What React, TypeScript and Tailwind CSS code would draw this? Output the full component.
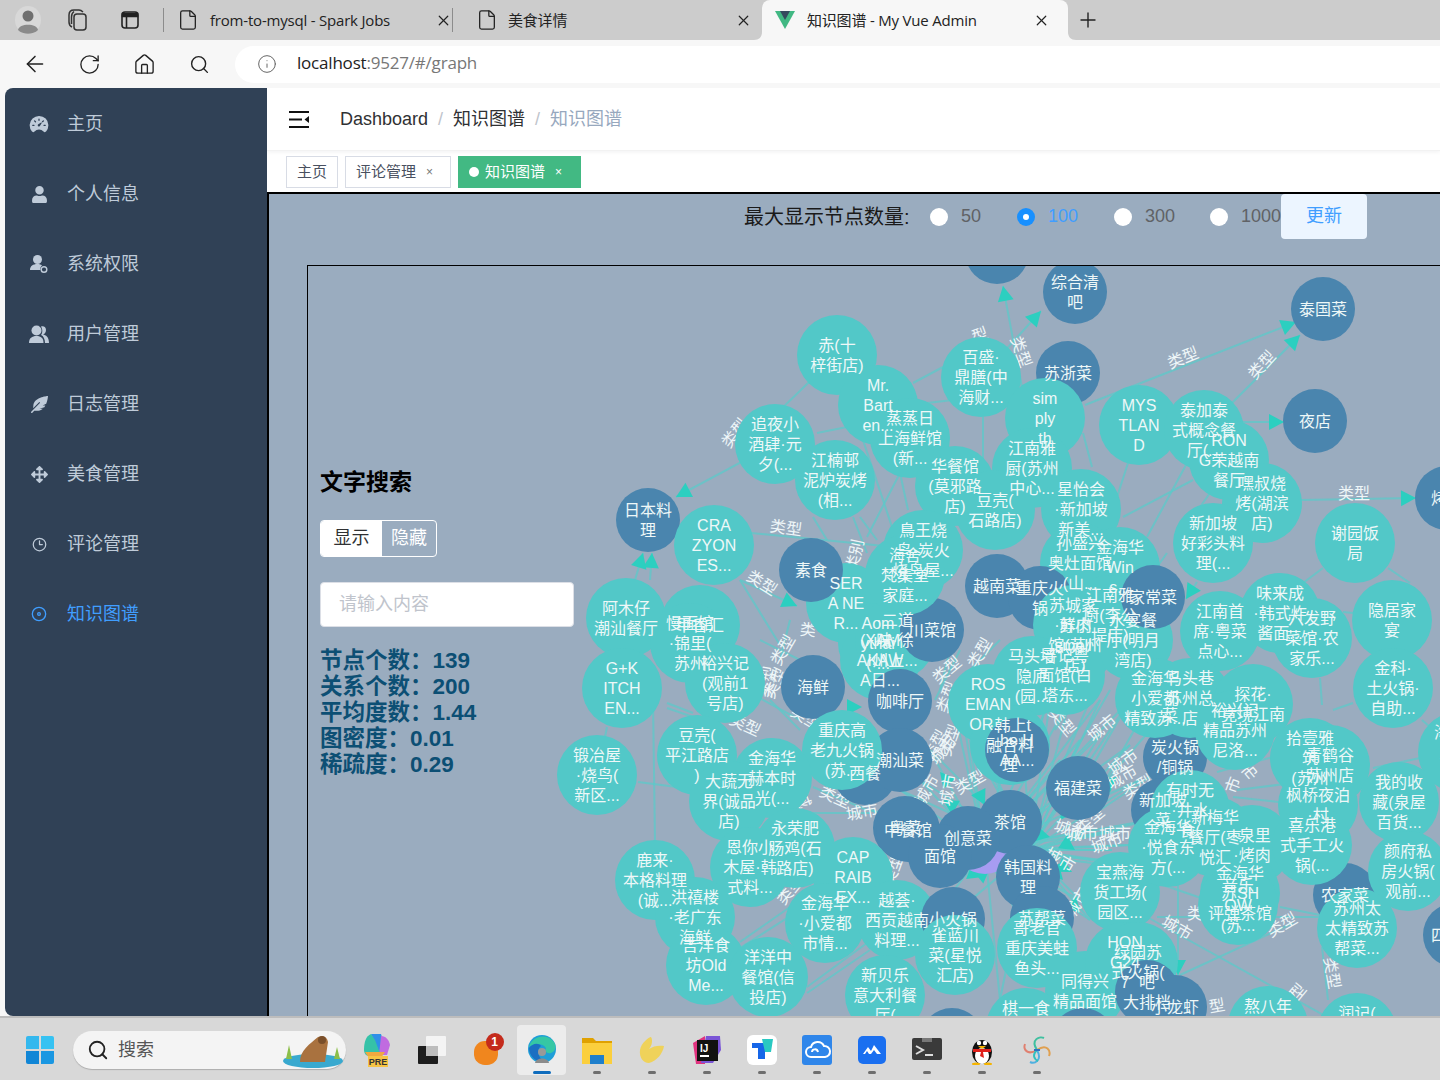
import { ArrowLeft, RotateCw, Home, Search, Info, File, X, Plus } from "lucide-react";
import { FaUser, FaFeatherAlt, FaArrowsAlt } from "react-icons/fa";
import { IoSpeedometer } from "react-icons/io5";
import { LuClock3, LuDisc } from "react-icons/lu";

const FONT = "font-['Liberation_Sans','Noto_Sans_CJK_SC',sans-serif]";

const LIGHT = "#52c8c8";
const DARK = "#4a85ae";
const EDGE = "#5ccaca";
const ARROW = "#2ccfc0";

type GraphNode = { x: number; y: number; t: string[]; d?: boolean; r?: number; c?: string };

// screenshot coordinates, painted in this order
const nodes: GraphNode[] = [
  { x: 997, y: 252, t: [], d: true },
  { x: 1075, y: 292, t: ["综合清", "吧"], d: true },
  { x: 1323, y: 309, t: ["泰国菜"], d: true },
  { x: 1068, y: 373, t: ["苏浙菜"], d: true },
  { x: 1315, y: 421, t: ["夜店"], d: true },
  { x: 1447, y: 498, t: ["烤肉"], d: true },
  { x: 648, y: 520, t: ["日本料", "理"], d: true },
  { x: 837, y: 355, t: ["赤(十", "梓街店)"] },
  { x: 981, y: 377, t: ["百盛·", "鼎膳(中", "海财..."] },
  { x: 878, y: 405, t: ["Mr.", "Bart", "en..."] },
  { x: 910, y: 438, t: ["蒸蒸日", "上海鲜馆", "(新..."] },
  { x: 775, y: 444, t: ["追夜小", "酒肆·元", "夕(..."] },
  { x: 835, y: 480, t: ["江楠邨", "泥炉炭烤", "(相..."] },
  { x: 1045, y: 418, t: ["sim", "ply", "th"] },
  { x: 1139, y: 425, t: ["MYS", "TLAN", "D"] },
  { x: 1204, y: 430, t: ["泰加泰", "式概念餐", "厅(..."] },
  { x: 1229, y: 460, t: ["RON", "G荣越南", "餐厅"] },
  { x: 1032, y: 468, t: ["江南雅", "厨(苏州", "中心..."] },
  { x: 955, y: 486, t: ["华餐馆", "(莫邪路", "店)"] },
  { x: 995, y: 510, t: ["豆壳(", "石路店)"] },
  { x: 1262, y: 503, t: ["嘿叔烧", "烤(湖滨", "店)"] },
  { x: 1081, y: 509, t: ["星怡会", "·新加坡", "新美..."] },
  { x: 1213, y: 543, t: ["新加坡", "好彩头料", "理(..."] },
  { x: 1355, y: 543, t: ["谢园饭", "局"] },
  { x: 714, y: 545, t: ["CRA", "ZYON", "ES..."] },
  { x: 846, y: 603, t: ["SER", "A NE", "R..."] },
  { x: 811, y: 570, t: ["素食"], d: true },
  { x: 878, y: 643, t: ["Aom", "ythai", "(·..."] },
  { x: 880, y: 660, t: ["(XAM", "AKAW", "A日..."] },
  { x: 895, y: 640, t: ["·二道", "味·徐", "州上..."] },
  { x: 932, y: 630, t: ["川菜馆"], d: true },
  { x: 923, y: 550, t: ["鳥王烧", "鸟·炭火", "烧鸟屋..."] },
  { x: 905, y: 575, t: ["海舍", "梵集堂", "家庭..."] },
  { x: 1080, y: 563, t: ["孙盛兴", "奥灶面馆", "(山..."] },
  { x: 1120, y: 567, t: ["金海华", "Win", "s..."] },
  { x: 997, y: 586, t: ["越南菜"], d: true },
  { x: 1040, y: 598, t: ["重庆火", "锅"], d: true },
  { x: 1392, y: 620, t: ["隐居家", "宴"] },
  { x: 1280, y: 613, t: ["味来成", "·韩式炸", "酱面..."] },
  { x: 1312, y: 638, t: ["六发野", "菜馆·农", "家乐..."] },
  { x: 1220, y: 631, t: ["江南首", "席·粤菜", "点心..."] },
  { x: 1073, y: 625, t: ["苏城家", "·鲜肉", "smell"] },
  { x: 1075, y: 645, t: ["苏小", "馆(苏州", "店)"] },
  { x: 1110, y: 615, t: ["江南雅", "厨(李公", "堤店)"] },
  { x: 1133, y: 640, t: ["水宴餐", "厅(明月", "湾店)"] },
  { x: 1153, y: 597, t: ["家常菜"], d: true },
  { x: 626, y: 618, t: ["阿木仔", "潮汕餐厅"] },
  { x: 700, y: 625, t: ["甲香汇"] },
  { x: 690, y: 643, t: ["慢面馆", "·锦里(", "苏州"] },
  { x: 725, y: 683, t: ["裕兴记", "(观前1", "号店)"] },
  { x: 622, y: 688, t: ["G+K", "ITCH", "EN..."] },
  { x: 813, y: 687, t: ["海鲜"], d: true },
  { x: 900, y: 701, t: ["咖啡厅"], d: true },
  { x: 865, y: 773, t: ["西餐"], d: true },
  { x: 900, y: 760, t: ["潮汕菜"], d: true },
  { x: 842, y: 750, t: ["重庆高", "老九火锅", "(苏..."] },
  { x: 697, y: 755, t: ["豆壳(", "平江路店", ")"] },
  { x: 597, y: 775, t: ["锻冶屋", "·烧鸟(", "新区..."] },
  { x: 772, y: 778, t: ["金海华", "赫本时", "光(..."] },
  { x: 729, y: 801, t: ["大蔬无", "界(诚品", "店)"] },
  { x: 988, y: 704, t: ["ROS", "EMAN", "OR..."] },
  { x: 1032, y: 676, t: ["马头墙", "隐庐", "(园..."] },
  { x: 1065, y: 675, t: ["寻记粤", "面馆(白", "塔东..."] },
  { x: 1010, y: 745, t: ["·韩上t", "融合料", "理"] },
  { x: 1017, y: 750, t: ["he H", "AA..."], d: true },
  { x: 1078, y: 788, t: ["福建菜"], d: true },
  { x: 985, y: 842, t: [], c: "#a79cf2", r: 32 },
  { x: 905, y: 828, t: ["粤菜"], d: true },
  { x: 908, y: 830, t: ["中餐馆"], d: true },
  { x: 1010, y: 822, t: ["茶馆"], d: true },
  { x: 968, y: 838, t: ["创意菜"], d: true },
  { x: 940, y: 856, t: ["面馆"], d: true },
  { x: 1028, y: 877, t: ["韩国料", "理"], d: true },
  { x: 1042, y: 918, t: ["苏帮菜"], d: true },
  { x: 795, y: 848, t: ["永荣肥", "肠鸡(石", "路店)"] },
  { x: 750, y: 867, t: ["恩你小", "木屋·韩", "式料..."] },
  { x: 853, y: 877, t: ["CAP", "RAIB", "EX..."] },
  { x: 655, y: 880, t: ["鹿来·", "本格料理", "(诚..."] },
  { x: 695, y: 917, t: ["洪禧楼", "·老广东", "海鲜"] },
  { x: 706, y: 965, t: ["吉洋食", "坊Old", "Me..."] },
  { x: 768, y: 977, t: ["洋洋中", "餐馆(信", "投店)"] },
  { x: 825, y: 923, t: ["金海华", "·小爱都", "市情..."] },
  { x: 897, y: 920, t: ["越荟·", "西贡越南", "料理..."] },
  { x: 885, y: 995, t: ["新贝乐", "意大利餐", "厅("] },
  { x: 953, y: 919, t: ["小火锅"], d: true },
  { x: 955, y: 955, t: ["雀蓝川", "菜(星悦", "汇店)"] },
  { x: 1037, y: 948, t: ["哥老官", "重庆美蛙", "鱼头..."] },
  { x: 1120, y: 892, t: ["宝燕海", "货工场(", "园区..."] },
  { x: 1175, y: 757, t: ["炭火锅", "/铜锅"], d: true },
  { x: 1155, y: 698, t: ["金海华", "小爱都", "精致苏..."] },
  { x: 1190, y: 698, t: ["马头巷", "苏州总", "店"] },
  { x: 1170, y: 715, t: ["菜"], r: 0 },
  { x: 1253, y: 704, t: ["探花·", "竟境江南"] },
  { x: 1235, y: 730, t: ["裕兴记", "精品苏州", "尼洛..."] },
  { x: 1393, y: 688, t: ["金科·", "土火锅·", "自助..."] },
  { x: 1458, y: 752, t: ["海底捞", "火锅(", "店..."] },
  { x: 1163, y: 810, t: ["新加坡", "菜"], d: true },
  { x: 1190, y: 810, t: ["有时无", "·井水", "食("] },
  { x: 1168, y: 847, t: ["金海华", "·悦食东", "方(..."] },
  { x: 1215, y: 837, t: ["新梅华", "餐厅(枣", "悦汇"] },
  { x: 1252, y: 845, t: ["·泉里", "·烤肉"] },
  { x: 1240, y: 893, t: ["金海华", "苏SH", "评弹茶馆"] },
  { x: 1238, y: 905, t: ["音乐", "OW", "(苏..."] },
  { x: 1310, y: 758, t: ["拾壹雅", "筑", "(苏州"] },
  { x: 1330, y: 765, t: ["青鹤谷", "苏州店"] },
  { x: 1318, y: 805, t: ["枫桥夜泊", "·村"] },
  { x: 1399, y: 802, t: ["我的收", "藏(泉屋", "百货..."] },
  { x: 1345, y: 895, t: ["农家菜"], d: true },
  { x: 1312, y: 845, t: ["喜乐港", "式手工火", "锅(..."] },
  { x: 1408, y: 871, t: ["颜府私", "房火锅(", "观前..."] },
  { x: 1357, y: 928, t: ["苏州太", "太精致苏", "帮菜..."] },
  { x: 1455, y: 935, t: ["四川菜"], d: true },
  { x: 1085, y: 991, t: ["同得兴", "精品面馆"] },
  { x: 1125, y: 962, t: ["HON", "G24", "7"] },
  { x: 1138, y: 962, t: ["绿园苏", "式火锅("] },
  { x: 1147, y: 992, t: ["吧", "大排档"], d: true },
  { x: 1175, y: 1007, t: ["小龙虾"], d: true },
  { x: 1026, y: 1028, t: ["棋一食", "", ""] },
  { x: 952, y: 1040, t: [], d: true },
  { x: 1083, y: 1040, t: [], d: true },
  { x: 1268, y: 1026, t: ["熬八年", "", ""] },
  { x: 1357, y: 1033, t: ["润记(", "", ""] },
];

type Edge = [number, number, number, number, number?];

const fanTargets = [
  [1060, 800], [1090, 830], [1100, 860], [1112, 850], [1130, 845], [1060, 760], [1080, 740],
  [1100, 735], [1130, 745], [1140, 780], [1150, 820], [1020, 690], [1050, 700], [1070, 700],
  [1100, 700], [1130, 700], [970, 740], [960, 700], [950, 690], [930, 750], [920, 780],
  [900, 790], [870, 810], [1080, 900], [1090, 920], [1060, 1000], [1000, 1000], [900, 960],
  [1150, 870], [1120, 830],
];

const edges: Edge[] = [
  [775, 444, 676, 497, 1], [837, 355, 775, 415], [981, 377, 1041, 311, 1], [1030, 430, 1003, 286, 1],
  [1085, 405, 1296, 322, 1], [1230, 405, 1300, 335, 1], [1240, 422, 1284, 422, 1], [1300, 500, 1416, 498, 1],
  [720, 530, 905, 548], [740, 580, 797, 606, 1], [740, 580, 780, 645], [635, 580, 643, 553, 1], [650, 580, 652, 553, 1],
  [900, 473, 867, 537], [853, 517, 867, 553], [860, 517, 877, 540], [863, 440, 892, 527], [900, 473, 908, 510],
  [817, 433, 847, 427], [913, 383, 943, 367], [927, 403, 953, 400], [813, 517, 827, 540], [983, 417, 983, 460],
  [1128, 463, 1117, 497], [1092, 467, 1083, 433], [1187, 463, 1147, 537], [1193, 480, 1123, 517], [1210, 493, 1200, 507],
  [1323, 568, 1303, 583], [1388, 568, 1410, 583], [1343, 612, 1353, 613], [1197, 582, 1186, 599, 1], [1167, 553, 1157, 567],
  [1320, 678, 1322, 705], [1353, 703, 1333, 710], [1422, 720, 1430, 727], [1373, 768, 1420, 758],
  [1157, 917, 1320, 917], [1280, 907, 1320, 915], [1180, 975, 1293, 923], [1147, 917, 1327, 1017], [1163, 885, 1207, 900],
  [1178, 880, 1178, 975, 1], [1322, 947, 1328, 1000], [1237, 790, 1293, 783], [1233, 797, 1287, 803], [1217, 772, 1273, 757],
  [653, 700, 655, 842], [638, 782, 677, 787], [607, 727, 605, 737], [667, 703, 693, 713], [667, 708, 693, 717],
  [740, 942, 790, 907], [740, 948, 795, 913], [807, 993, 870, 950], [807, 987, 867, 943], [813, 813, 870, 813],
  [813, 787, 867, 810], [760, 640, 800, 660], [745, 690, 800, 720], [770, 700, 800, 730], [790, 620, 780, 660],
  [950, 650, 940, 690], [960, 650, 935, 700], [1000, 640, 960, 680], [1030, 690, 1010, 720],
  [1090, 700, 1060, 770], [1110, 690, 1070, 760], [1130, 700, 1090, 770], [1140, 720, 1100, 790],
  [1150, 730, 1090, 800], [1160, 770, 1100, 810], [1045, 700, 1040, 735], [1070, 705, 1055, 730],
  ...fanTargets.map(([x, y]): Edge => [985, 850, x, y]),
  ...fanTargets.map(([x, y]): Edge => [1030, 850, x, y]),
];

const extraArrows: Edge[] = [
  [1020, 830, 1050, 837, 1], [1040, 855, 1063, 880, 1], [1060, 890, 1080, 913, 1], [1100, 790, 1117, 777, 1],
  [960, 810, 943, 800, 1], [955, 790, 940, 772, 1], [965, 870, 983, 877, 1], [850, 707, 862, 707, 1],
  [1010, 795, 1040, 810, 1], [975, 785, 985, 805, 1], [1075, 800, 1060, 820, 1], [1030, 895, 1050, 890, 1],
  [1060, 840, 1075, 850, 1], [1050, 860, 1072, 872, 1], [975, 880, 990, 868, 1],
];

const labels: [number, number, number, string][] = [
  [735, 433, -52, "类型"], [786, 528, 8, "类型"], [762, 583, 32, "类型"], [808, 630, 5, "类"], [855, 555, -78, "类别"],
  [1183, 358, -22, "类型"], [1262, 365, -48, "类型"], [1354, 493, 0, "类型"], [1021, 352, 70, "类型"], [980, 335, -20, "型"],
  [963, 395, 20, "型"], [745, 725, 25, "类型"], [783, 650, -60, "类型"], [768, 682, -80, "类型"], [775, 683, -65, "类型"],
  [806, 718, 30, "类型"], [835, 797, 25, "类型"], [862, 812, -10, "城市"], [935, 745, -60, "类型"], [943, 750, -50, "城市"],
  [950, 740, -70, "类型"], [970, 782, -30, "类型"], [927, 790, -60, "城市"], [948, 790, -80, "城市"], [893, 870, -70, "类型"],
  [790, 890, -50, "类型"], [803, 800, 70, "城"], [947, 670, -40, "类型"], [947, 697, -70, "类型"], [980, 653, -60, "类型"],
  [1102, 728, -40, "城市"], [1123, 762, -35, "城市"], [1122, 777, -30, "城市"], [1062, 722, 50, "类型"], [1138, 787, -30, "类型"],
  [1082, 833, 0, "城市"], [1115, 833, 0, "城市"], [1107, 843, -20, "城市"], [1060, 860, 30, "城市"], [1077, 903, -60, "城市"],
  [1177, 928, 30, "城市"], [1195, 913, 0, "类"], [1282, 925, -30, "类型"], [1217, 1006, -10, "型"], [1298, 992, -50, "型"],
  [1332, 973, 80, "类型"], [1233, 785, -70, "市"], [1250, 772, -40, "市"], [1090, 820, -40, "类型"], [1070, 830, 20, "城市"],
];

function arrowPoints(x1: number, y1: number, x2: number, y2: number) {
  const a = Math.atan2(y2 - y1, x2 - x1);
  const bx = x2 - Math.cos(a) * 15;
  const by = y2 - Math.sin(a) * 15;
  const px = -Math.sin(a) * 8;
  const py = Math.cos(a) * 8;
  return `${x2},${y2} ${bx + px},${by + py} ${bx - px},${by - py}`;
}

const Graph = () => (
  <svg
    className="absolute left-0 top-0"
    width={1132}
    height={750}
    viewBox="308 266 1132 750"
    fontFamily="'Liberation Sans','Noto Sans CJK SC',sans-serif"
  >
    {edges.map(([a, b, c, d], i) => (
      <line key={i} x1={a} y1={b} x2={c} y2={d} stroke={EDGE} strokeWidth={2} strokeOpacity={0.75} />
    ))}
    {[...edges, ...extraArrows]
      .filter((e) => e[4])
      .map(([a, b, c, d], i) => (
        <polygon key={i} points={arrowPoints(a, b, c, d)} fill={ARROW} />
      ))}
    {labels.map(([x, y, r, s], i) => (
      <text
        key={i}
        x={x}
        y={y}
        fontSize={16}
        fill="#eef6f8"
        textAnchor="middle"
        dominantBaseline="central"
        transform={`rotate(${r} ${x} ${y})`}
      >
        {s}
      </text>
    ))}
    {nodes.map((n, i) => (
      <circle key={i} cx={n.x} cy={n.y} r={n.r ?? (n.d ? 32 : 40)} fill={n.c ?? (n.d ? DARK : LIGHT)} />
    ))}
    {nodes.map((n, i) =>
      n.t.map((line, j) => (
        <text
          key={`${i}-${j}`}
          x={n.x}
          y={n.y + (j - (n.t.length - 1) / 2) * 20}
          fontSize={16}
          fill="#eef8f8"
          textAnchor="middle"
          dominantBaseline="central"
        >
          {line}
        </text>
      ))
    )}
  </svg>
);

const UserBadgeIcon = () => (
  <svg width="20" height="20" viewBox="0 0 20 20" fill="currentColor">
    <circle cx="8.500" cy="5.500" r="4.500" />
    <path d="M1 16c0-4 3-6 7.500-6 2 0 3.500.5 4.500 1.500-1.500 1-2 3-1.500 4.500z" />
    <circle cx="15" cy="15.500" r="2.800" fill="none" stroke="currentColor" strokeWidth="1.400" />
  </svg>
);

const UsersIcon = () => (
  <svg width="20" height="19" viewBox="0 0 20 19" fill="currentColor">
    <circle cx="7.500" cy="5.500" r="5" />
    <path d="M0 18c0-5 3-7 7.500-7s7 2 7 7z" />
    <path d="M12 1.500c3-1 5 1 5 3.500s-1.500 4-3 4.500c3 .5 6 2.500 6 8.500h-4c0-4-1.500-7-4-8 1.500-1.500 2-5.500 0-8.500z" />
  </svg>
);

const menu = [
  { label: "主页", icon: <IoSpeedometer size={20} /> },
  { label: "个人信息", icon: <FaUser size={17} /> },
  { label: "系统权限", icon: <UserBadgeIcon /> },
  { label: "用户管理", icon: <UsersIcon /> },
  { label: "日志管理", icon: <FaFeatherAlt size={17} /> },
  { label: "美食管理", icon: <FaArrowsAlt size={17} /> },
  { label: "评论管理", icon: <LuClock3 size={15} /> },
  { label: "知识图谱", icon: <LuDisc size={16} />, active: true },
];

const Sidebar = () => (
  <aside className="ml-[5px] w-[262px] shrink-0 rounded-l-lg bg-[#304156] pt-[1px]">
    {menu.map((m) => (
      <div
        key={m.label}
        className={`flex h-[70px] items-center pl-[24px] text-[18px] ${
          m.active ? "text-[#409eff]" : "text-[#bfcbd9]"
        }`}
      >
        <span className="flex w-[20px] justify-center">{m.icon}</span>
        <span className="ml-[18px]">{m.label}</span>
      </div>
    ))}
  </aside>
);

const Navbar = () => (
  <div className="flex h-[63px] items-center border-b border-[#f2f2f2] shadow-[0_1px_4px_rgba(0,21,41,0.06)]">
    <svg className="ml-[22px]" width="21" height="17" viewBox="0 0 21 17">
      <path d="M0 1h20M0 16h20M0 8.500h13" stroke="#111" strokeWidth="2" />
      <path d="M20 5v7l-4.500-3.500z" fill="#111" />
    </svg>
    <div className="ml-[30px] flex items-center text-[18px] text-[#303133]">
      <span>Dashboard</span>
      <span className="mx-[10px] text-[#c0c4cc]">/</span>
      <span>知识图谱</span>
      <span className="mx-[10px] text-[#c0c4cc]">/</span>
      <span className="text-[#97a8be]">知识图谱</span>
    </div>
  </div>
);

const TagsBar = () => (
  <div className="flex h-[41px] items-start gap-[7px] pl-[19px] pt-[5px] text-[15px]">
    <div className="flex h-[32px] w-[52px] items-center justify-center border border-[#d8dce5] text-[#495060]">
      主页
    </div>
    <div className="flex h-[32px] w-[106px] items-center border border-[#d8dce5] pl-[10px] text-[#495060]">
      评论管理
      <span className="ml-[10px] text-[12px] text-[#777]">×</span>
    </div>
    <div className="flex h-[32px] w-[123px] items-center bg-[#42b983] pl-[11px] text-white">
      <span className="mr-[6px] h-[10px] w-[10px] rounded-full bg-white" />
      知识图谱
      <span className="ml-[10px] text-[12px]">×</span>
    </div>
  </div>
);

const radios = [
  { label: "50", w: "w-[87px]" },
  { label: "100", w: "w-[97px]", on: true },
  { label: "300", w: "w-[96px]" },
  { label: "1000", w: "w-[71px]" },
];

const Controls = () => (
  <div className="flex h-[45px] items-center pl-[475px]">
    <span className="w-[186px] shrink-0 text-[20px] text-[#1a1a1a]">最大显示节点数量:</span>
    {radios.map((r) => (
      <div key={r.label} className={`flex shrink-0 items-center text-[18px] ${r.w}`}>
        {r.on ? (
          <span className="flex h-[18px] w-[18px] items-center justify-center rounded-full bg-[#1890ff]">
            <span className="h-[6px] w-[6px] rounded-full bg-white" />
          </span>
        ) : (
          <span className="h-[18px] w-[18px] rounded-full bg-white" />
        )}
        <span className={`ml-[13px] ${r.on ? "text-[#409eff]" : "text-[#606266]"}`}>{r.label}</span>
      </div>
    ))}
    <button className="flex h-[45px] w-[86px] shrink-0 items-center justify-center rounded bg-[#ecf5ff] text-[18px] text-[#409eff]">
      更新
    </button>
  </div>
);

const stats = [
  ["节点个数：", "139"],
  ["关系个数：", "200"],
  ["平均度数：", "1.44"],
  ["图密度：", "0.01"],
  ["稀疏度：", "0.29"],
];

const SearchPanel = () => (
  <div className="relative z-10 ml-[12px] flex w-[254px] flex-col pt-[201px]">
    <h2 className="text-[23px] leading-[30px] font-bold text-black">文字搜索</h2>
    <div className="mt-[23px] flex h-[37px] w-[117px] overflow-hidden rounded border border-white text-[18px]">
      <span className="flex w-[61px] items-center justify-center bg-white text-[#303133]">显示</span>
      <span className="flex flex-1 items-center justify-center text-white">隐藏</span>
    </div>
    <div className="mt-[25px] flex h-[45px] w-[254px] items-center rounded border border-[#dcdfe6] bg-white pl-[18px] text-[18px] text-[#c0c4cc]">
      请输入内容
    </div>
    <div className="mt-[21px] text-[22.5px] leading-[26px] font-bold text-[#0c4f74]">
      {stats.map(([k, v]) => (
        <div key={k}>
          {k}
          {v}
        </div>
      ))}
    </div>
  </div>
);

const GraphArea = () => (
  <div className="flex-1 overflow-hidden border-l-2 border-t-2 border-black bg-[#9aacbf]">
    <Controls />
    <div className="relative ml-[38px] mt-[26px] flex h-[800px] w-[1200px] overflow-hidden border-l border-t border-black">
      <Graph />
      <SearchPanel />
    </div>
  </div>
);

const BrowserTabs = () => (
  <div className="flex h-10 shrink-0 items-center bg-[#cccccc] text-[15px] tracking-[-0.2px] text-[#222] font-['Open_Sans','Noto_Sans_CJK_SC',sans-serif]">
    <div className="flex w-[163px] items-center pl-[15px]">
      <svg width="26" height="28" viewBox="0 0 26 28">
        <ellipse cx="13" cy="14" rx="13" ry="14" fill="#d8d8d8" />
        <circle cx="13" cy="10" r="5.500" fill="#6f6f6f" />
        <path d="M3 24c1-7 19-7 20 0-5 5-15 5-20 0z" fill="#8a8a8a" />
      </svg>
      <svg className="ml-[25px]" width="24" height="24" viewBox="0 0 24 24" fill="none" stroke="#333" strokeWidth="1.500">
        <rect x="8" y="6" width="12" height="16" rx="3" />
        <path d="M6 19c-2-1-3-3-3-5V7c0-3 2-5 5-5h5c2 0 3 1 4 2" />
        <path d="M8 3.500C6 5 5.500 6.500 5.500 9v7" />
      </svg>
      <svg className="ml-[30px]" width="20" height="20" viewBox="0 0 20 20" fill="none" stroke="#222" strokeWidth="1.600">
        <rect x="2" y="2" width="16" height="16" rx="3" />
        <path d="M2.500 3.500h15v3h-15z" fill="#222" />
        <path d="M6.500 7v11" />
      </svg>
    </div>
    <div className="h-[24px] w-px bg-[#8c8c8c]" />
    <div className="flex w-[288px] items-center pl-[13px]">
      <File size={22} strokeWidth={1.4} />
      <span className="ml-[11px] w-[225px]">from-to-mysql - Spark Jobs</span>
      <X size={17} strokeWidth={1.7} />
    </div>
    <div className="h-[24px] w-px bg-[#8c8c8c]" />
    <div className="flex w-[309px] items-center pl-[23px]">
      <File size={22} strokeWidth={1.4} />
      <span className="ml-[10px] w-[227px]">美食详情</span>
      <X size={17} strokeWidth={1.7} />
    </div>
    <div className="relative flex h-[40px] w-[306px] items-center rounded-t-lg bg-[#f7f7f7] pl-[13px]">
      <svg className="absolute -left-[8px] bottom-0" width="8" height="8" viewBox="0 0 8 8">
        <path d="M0 8c5 0 8-3 8-8v8z" fill="#f7f7f7" />
      </svg>
      <svg width="20" height="18" viewBox="0 0 20 18">
        <path d="M0 0h20L10 18z" fill="#41b883" />
        <path d="M5 0h10l-5 9z" fill="#35495e" />
      </svg>
      <span className="ml-[12px] w-[226px]">知识图谱 - My Vue Admin</span>
      <X size={17} strokeWidth={1.7} />
      <svg className="absolute -right-[8px] bottom-0" width="8" height="8" viewBox="0 0 8 8">
        <path d="M0 0c0 5 3 8 8 8H0z" fill="#f7f7f7" />
      </svg>
    </div>
    <Plus className="ml-[8px]" size={24} strokeWidth={1.4} />
  </div>
);

const AddressBar = () => (
  <div className="flex h-12 shrink-0 items-center bg-[#f7f7f7] text-[#222]">
    <div className="flex w-[235px] items-center pl-[22px]">
      <ArrowLeft size={26} strokeWidth={1.4} />
      <RotateCw className="ml-[30px]" size={23} strokeWidth={1.4} />
      <Home className="ml-[32px]" size={23} strokeWidth={1.4} />
      <Search className="ml-[33px]" size={21} strokeWidth={1.6} />
    </div>
    <div className="flex h-[37px] flex-1 items-center rounded-l-full bg-white pl-[22px]">
      <Info size={20} strokeWidth={1.2} className="text-[#666]" />
      <span className="ml-[20px] -translate-y-px tracking-[-0.2px] font-['Open_Sans',sans-serif] text-[17px] text-[#777]">
        <span className="text-[#222]">localhost</span>:9527/#/graph
      </span>
    </div>
  </div>
);

const WinIcon = () => (
  <svg width="30" height="30" viewBox="0 0 30 30">
    <path d="M1 3a2 2 0 012-2h11v13H1z" fill="#34b8ee" />
    <path d="M16 1h11a2 2 0 012 2v11H16z" fill="#36c2f2" />
    <path d="M1 16h13v13H3a2 2 0 01-2-2z" fill="#1186d6" />
    <path d="M16 16h13v11a2 2 0 01-2 2H16z" fill="#1a97e2" />
  </svg>
);

const Capybara = () => (
  <svg width="64" height="38" viewBox="0 0 64 38">
    <ellipse cx="33" cy="30" rx="30" ry="7" fill="#39a9cf" />
    <path d="M6 28l3-14 3 14zM54 28l3-12 3 12z" fill="#8cbf4a" />
    <path d="M20 31c0-12 10-18 18-25 6-2 9 0 10 5l-3 20z" fill="#a9723f" />
    <circle cx="42" cy="9" r="4" fill="#7a4f2a" />
  </svg>
);

const CopilotIcon = () => (
  <svg width="30" height="36" viewBox="0 0 30 36">
    <path d="M9 2h10l6 18h-8z" fill="#2f8fe8" />
    <path d="M19 4c5 0 8 4 9 9l-3 10h-8z" fill="#c06be0" />
    <path d="M9 2C4 4 2 10 2 18c0 3 2 6 5 6h12L13 8z" fill="#35c2a8" />
    <path d="M3 20h20l-4 6H7z" fill="#f0a840" />
    <rect x="6" y="24" width="20" height="11" fill="#f6c445" />
    <text x="16" y="33" fontSize="9" fontWeight="bold" textAnchor="middle" fill="#333" fontFamily="'Liberation Sans',sans-serif">
      PRE
    </text>
  </svg>
);

const SquaresIcon = () => (
  <svg width="30" height="30" viewBox="0 0 30 30">
    <rect x="9" y="1" width="20" height="20" rx="1" fill="#f4f4f4" />
    <rect x="1" y="11" width="20" height="18" rx="1" fill="#1d1d1d" />
    <rect x="9" y="11" width="12" height="10" fill="#bdbdbd" />
  </svg>
);

const OrangeIcon = () => (
  <div className="relative h-[30px] w-[30px]">
    <div className="absolute left-[2px] top-[6px] h-[24px] w-[24px] rounded-[45%] bg-[#f0861e]" />
    <div className="absolute -top-[2px] left-[14px] flex h-[18px] w-[18px] items-center justify-center rounded-full bg-[#c42b1c] text-[12px] font-bold text-white">
      1
    </div>
  </div>
);

const EdgeIcon = () => (
  <svg width="32" height="34" viewBox="0 0 32 34">
    <circle cx="16" cy="16" r="14" fill="#1f9ed8" />
    <path d="M3 14C5 4 20-1 28 9c3 5 1 10-3 11-3 1-7-1-5-5-3-5-12-5-17-1z" fill="#36c7a4" />
    <path d="M3 15c3-4 9-6 12-2-4 3-4 11 3 15-8 2-15-5-15-13z" fill="#1b6fc2" />
    <circle cx="16" cy="19" r="4" fill="#999" />
    <path d="M9 30c1-6 13-6 14 0z" fill="#8c8c8c" />
  </svg>
);

const FolderIcon = () => (
  <svg width="32" height="30" viewBox="0 0 32 30">
    <path d="M1 3h11l3 3h16v4H1z" fill="#e0a100" />
    <rect x="1" y="8" width="30" height="21" fill="#fbcf3d" />
    <rect x="9" y="20" width="14" height="9" fill="#1f7fcc" />
  </svg>
);

const YellowIcon = () => (
  <svg width="30" height="30" viewBox="0 0 30 30">
    <path d="M3 15C4 8 12 2 14 2c2 3 1 9-2 12 4-3 10-4 15-3-1 7-7 15-15 17-6 0-10-6-9-13z" fill="#efd25a" />
  </svg>
);

const IdeaIcon = () => (
  <svg width="30" height="30" viewBox="0 0 30 30">
    <path d="M1 8l12-7v28H4z" fill="#e0337f" />
    <path d="M14 1h14l1 14-8 13H9z" fill="#7a55d6" />
    <rect x="5" y="5" width="21" height="21" fill="#111" />
    <text x="8" y="17" fontSize="10" fontWeight="bold" fill="#fff" fontFamily="'Liberation Sans',sans-serif">
      IJ
    </text>
    <rect x="8" y="20" width="9" height="2" fill="#fff" />
  </svg>
);

const ToDeskIcon = () => (
  <svg width="30" height="30" viewBox="0 0 30 30">
    <rect width="30" height="30" rx="6" fill="#fff" />
    <path d="M5 8h12v5H5z" fill="#1666e8" />
    <path d="M11 13h7v11h-7z" fill="#1666e8" />
    <path d="M15 4h11l-2 13h-6z" fill="#29c9c2" />
  </svg>
);

const CloudIcon = () => (
  <svg width="30" height="30" viewBox="0 0 30 30">
    <rect width="30" height="30" rx="3" fill="#2f86ea" />
    <path d="M9 22a5 5 0 010-10 7 7 0 0113-1 5.500 5.500 0 011 11z" fill="none" stroke="#fff" strokeWidth="2" />
    <path d="M10 17c0-3 5-4 6 0" fill="none" stroke="#fff" strokeWidth="2" />
  </svg>
);

const MIcon = () => (
  <svg width="28" height="28" viewBox="0 0 28 28">
    <rect width="28" height="28" rx="5" fill="#1a6ff0" />
    <path d="M5 18l5-7 3 4 3-6 7 9h-4l-3-4-3 4h-2l-2-3-2 3z" fill="#fff" />
  </svg>
);

const TerminalIcon = () => (
  <svg width="30" height="24" viewBox="0 0 30 24">
    <rect width="30" height="22" rx="2" fill="#3a3a3a" />
    <rect x="10" width="10" height="4" fill="#777" />
    <path d="M4 8l7 4-7 4" stroke="#ddd" strokeWidth="2" fill="none" />
    <rect x="13" y="16" width="8" height="2" fill="#ddd" />
  </svg>
);

const QQIcon = () => (
  <svg width="26" height="30" viewBox="0 0 26 30">
    <ellipse cx="13" cy="17" rx="10" ry="12" fill="#111" />
    <ellipse cx="13" cy="21" rx="7" ry="8" fill="#fff" />
    <circle cx="10" cy="8" r="2.200" fill="#fff" />
    <circle cx="16" cy="8" r="2.200" fill="#fff" />
    <path d="M9 11h8l-4 3z" fill="#f5b400" />
    <path d="M4 14h18v3H14l1 6-4-2 1-4H4z" fill="#e0201b" />
    <ellipse cx="7" cy="29" rx="4" ry="1.500" fill="#f5b400" />
    <ellipse cx="19" cy="29" rx="4" ry="1.500" fill="#f5b400" />
  </svg>
);

const SwirlIcon = () => (
  <svg width="30" height="30" viewBox="0 0 30 30" fill="none" strokeWidth="2">
    <path d="M15 15C8 4 18 1 22 3" stroke="#40c0a0" />
    <path d="M15 15C25 8 29 16 27 21" stroke="#e0a050" />
    <path d="M15 15C21 26 12 29 8 27" stroke="#50b0e0" />
    <path d="M15 15C5 21 1 14 3 9" stroke="#e08070" />
    <path d="M15 15C10 20 12 24 16 26" stroke="#30c0c0" />
    <path d="M12 15h6" stroke="#3070c0" />
  </svg>
);

const taskIcons = [
  <CopilotIcon />,
  <SquaresIcon />,
  <OrangeIcon />,
  <EdgeIcon />,
  <FolderIcon />,
  <YellowIcon />,
  <IdeaIcon />,
  <ToDeskIcon />,
  <CloudIcon />,
  <MIcon />,
  <TerminalIcon />,
  <QQIcon />,
  <SwirlIcon />,
];

const Taskbar = () => (
  <div className="flex h-[64px] shrink-0 items-center border-t-2 border-[#bdbdbd] bg-[#d8d8d8] pl-[25px] pt-[2px]">
    <WinIcon />
    <div className="ml-[18px] flex h-[38px] w-[273px] items-center rounded-full bg-[#f4f4f4] pl-[14px] text-[18px] text-[#555] shadow-[0_1px_1px_rgba(0,0,0,0.2)]">
      <Search size={22} strokeWidth={2} className="text-[#222]" />
      <span className="ml-[9px]">搜索</span>
      <span className="ml-auto mr-[2px]">
        <Capybara />
      </span>
    </div>
    <div className="ml-[3px] flex">
      {taskIcons.map((icon, i) => (
        <div key={i} className="relative flex h-[50px] w-[55px] items-center justify-center">
          {i === 3 && <span className="absolute inset-y-0 left-[3px] right-[3px] rounded bg-[#ececec]" />}
          <span className="relative flex">{icon}</span>
          {i === 3 && <span className="absolute bottom-[1px] h-[3px] w-[18px] rounded bg-[#0f6cbd]" />}
          {i > 3 && <span className="absolute bottom-[1px] h-[3px] w-[8px] rounded bg-[#6e6e6e]" />}
        </div>
      ))}
    </div>
  </div>
);

export default function App() {
  return (
    <div className={`flex h-[1080px] w-[1440px] flex-col overflow-hidden bg-[#f7f7f7] ${FONT}`}>
      <BrowserTabs />
      <AddressBar />
      <div className="flex min-h-0 flex-1">
        <Sidebar />
        <main className="flex min-w-0 flex-1 flex-col overflow-hidden bg-white">
          <Navbar />
          <TagsBar />
          <GraphArea />
        </main>
      </div>
      <Taskbar />
    </div>
  );
}
